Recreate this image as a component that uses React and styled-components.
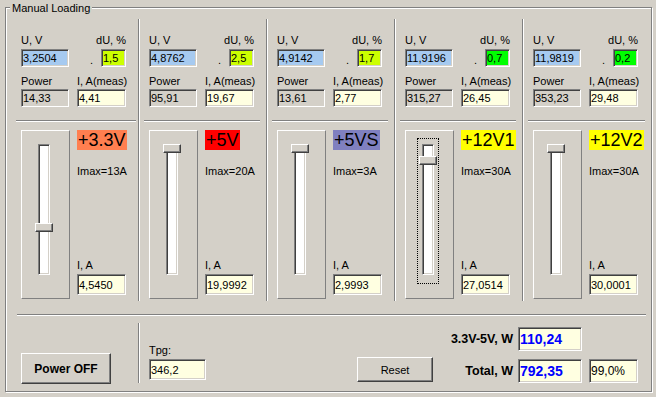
import React from "react";
import styled, { createGlobalStyle } from "styled-components";

const GlobalStyle = createGlobalStyle`
  html, body {
    margin: 0;
    padding: 0;
    background: #d4d0c8;
  }
  body {
    font-family: "Liberation Sans", Arial, sans-serif;
    font-size: 11px;
    color: #000;
  }
`;

const channels = [
  { u: "3,2504", du: "1,5", duColor: "#ccff00", power: "14,33", meas: "4,41", name: "+3.3V", tag: "#ff7f50", imax: 13, current: 4.545 },
  { u: "4,8762", du: "2,5", duColor: "#ccff00", power: "95,91", meas: "19,67", name: "+5V", tag: "#ff0000", imax: 20, current: 19.9992 },
  { u: "4,9142", du: "1,7", duColor: "#ccff00", power: "13,61", meas: "2,77", name: "+5VS", tag: "#8080c0", imax: 3, current: 2.9993 },
  { u: "11,9196", du: "0,7", duColor: "#00ff00", power: "315,27", meas: "26,45", name: "+12V1", tag: "#ffff00", imax: 30, current: 27.0514, focused: true },
  { u: "11,9819", du: "0,2", duColor: "#00ff00", power: "353,23", meas: "29,48", name: "+12V2", tag: "#ffff00", imax: 30, current: 30.0001 },
];

const fmt = (n) => n.toFixed(4).replace(".", ",");

const Window = styled.div`
  width: 656px;
  height: 397px;
  box-sizing: border-box;
  padding: 7px 0 0 5px;
  overflow: hidden;
`;

const Group = styled.section`
  position: relative;
  box-sizing: border-box;
  width: 647px;
  height: 385px;
  border: 1px solid #808080;
  box-shadow: inset 1px 1px 0 #fff, 1px 1px 0 #fff;
`;

const Legend = styled.span`
  position: absolute;
  top: -6px;
  left: 4px;
  padding: 0 2px;
  line-height: 13px;
  background: #d4d0c8;
`;

const Channels = styled.div`
  display: grid;
  grid-template-columns: 132px 128px 128px 128px 1fr;
  margin-top: 11px;
  height: 282px;
`;

const Channel = styled.div`
  box-sizing: border-box;
  padding-left: ${(p) => (p.$first ? 15 : 10)}px;
  border-left: ${(p) => (p.$first ? "none" : "1px solid #808080")};
  box-shadow: ${(p) => (p.$first ? "none" : "inset 1px 0 0 #fff")};
`;

const TopGrid = styled.div`
  display: grid;
  grid-template-columns: 48px 49px;
  column-gap: 8px;
  padding-top: 15px;
`;

const Caption = styled.div`
  line-height: 13px;
  height: 13px;
  white-space: nowrap;
  margin-top: ${(p) => p.$mt || 0}px;
  text-align: ${(p) => p.$align || "left"};
`;

const Field = styled.div`
  box-sizing: border-box;
  width: ${(p) => p.$w}px;
  height: ${(p) => p.$h || 18}px;
  margin-top: ${(p) => p.$mt || 0}px;
  margin-left: ${(p) => p.$ml || 0}px;
  padding-left: 1px;
  display: flex;
  align-items: center;
  background: ${(p) => p.$bg || "#ffffe1"};
  border: 1px solid;
  border-color: #808080 #fff #fff #808080;
  box-shadow: inset 1px 1px 0 #404040, inset -1px -1px 0 #d4d0c8;
  font-size: ${(p) => p.$size || 11}px;
  font-weight: ${(p) => (p.$bold ? 700 : 400)};
  color: ${(p) => p.$color || "#000"};
  white-space: nowrap;
  overflow: hidden;
`;

const DuCell = styled.div`
  display: flex;
  align-items: flex-end;
  justify-content: space-between;
  margin-top: 2px;
`;

const Dot = styled.span`
  margin-left: 13px;
  line-height: 13px;
`;

const Rule = styled.div`
  height: 0;
  border-top: 1px solid #808080;
  border-bottom: 1px solid #fff;
  margin: ${(p) => p.$margin};
`;

const SliderRow = styled.div`
  display: flex;
  margin-top: 8px;
  height: 169px;
`;

const Frame = styled.div`
  box-sizing: border-box;
  width: 49px;
  height: 169px;
  border: 1px solid;
  border-color: #fff #808080 #808080 #fff;
  padding: 7px 0 0 11px;
`;

const TrackWrap = styled.div`
  box-sizing: border-box;
  width: 22px;
  height: 146px;
  padding: 5px 4px 8px 4px;
  border: 1px dotted ${(p) => (p.$focused ? "#000" : "transparent")};
`;

const Track = styled.div`
  position: relative;
  box-sizing: border-box;
  width: 12px;
  height: 131px;
  background: #fff;
  border: 1px solid;
  border-color: #808080 #fff #fff #808080;
  box-shadow: inset 1px 1px 0 #404040, inset -1px -1px 0 #d4d0c8;
`;

const Thumb = styled.div`
  position: absolute;
  left: -4px;
  box-sizing: border-box;
  width: 18px;
  height: 9px;
  background: #d4d0c8;
  border: 1px solid;
  border-color: #fff #404040 #404040 #fff;
  box-shadow: inset -1px -1px 0 #808080;
`;

const InfoCol = styled.div`
  display: flex;
  flex-direction: column;
  align-items: flex-start;
  margin-left: 7px;
  padding-bottom: 4px;
`;

const Tag = styled.div`
  height: 20px;
  line-height: 20px;
  padding: 0 1px;
  font-size: 18px;
  background: ${(p) => p.$color};
  white-space: nowrap;
`;

const Spacer = styled.div`
  flex: 1;
`;

const BottomRow = styled.div`
  display: flex;
  align-items: flex-start;
`;

const LeftCell = styled.div`
  box-sizing: border-box;
  width: 132px;
  padding: 37px 0 0 15px;
`;

const VSep = styled.div`
  width: 0;
  height: 60px;
  margin-top: 7px;
  border-left: 1px solid #808080;
  border-right: 1px solid #fff;
`;

const Button = styled.button`
  box-sizing: border-box;
  width: ${(p) => p.$w}px;
  height: ${(p) => p.$h}px;
  margin: ${(p) => p.$margin || 0};
  padding: 0;
  background: #d4d0c8;
  border: 1px solid;
  border-color: #fff #404040 #404040 #fff;
  box-shadow: inset -1px -1px 0 #808080;
  font-family: "Liberation Sans", Arial, sans-serif;
  font-size: ${(p) => (p.$bold ? 12 : 11)}px;
  font-weight: ${(p) => (p.$bold ? 700 : 400)};
  color: #000;
`;

const TpgBlock = styled.div`
  margin: 28px 0 0 9px;
`;

const Totals = styled.div`
  margin: 11px 0 0 8px;
`;

const SumRow = styled.div`
  display: flex;
  align-items: center;
  margin-top: ${(p) => p.$mt || 0}px;
`;

const SumLabel = styled.div`
  width: 72px;
  margin-right: 5px;
  text-align: right;
  font-size: 12.5px;
  font-weight: 700;
  white-space: nowrap;
`;

const ChannelView = ({ ch, first }) => {
  const travel = 122;
  const ratio = Math.min(1, ch.current / ch.imax);
  const top = Math.round((1 - ratio) * travel) - 1;
  return (
    <Channel $first={first}>
      <TopGrid>
        <Caption>U, V</Caption>
        <Caption $align="right">dU, %</Caption>
        <Field $w={48} $mt={2} $bg="#a6caf0">{ch.u}</Field>
        <DuCell>
          <Dot>.</Dot>
          <Field $w={25} $bg={ch.duColor}>{ch.du}</Field>
        </DuCell>
        <Caption $mt={8}>Power</Caption>
        <Caption $mt={8}>I, A(meas)</Caption>
        <Field $w={48} $mt={1} $bg="#d4d0c8">{ch.power}</Field>
        <Field $w={49} $mt={1}>{ch.meas}</Field>
      </TopGrid>
      <Rule $margin={`13px ${first ? 2 : 6}px 0 -5px`} />
      <SliderRow>
        <Frame>
          <TrackWrap $focused={ch.focused}>
            <Track>
              <Thumb style={{ top }} />
            </Track>
          </TrackWrap>
        </Frame>
        <InfoCol>
          <Tag $color={ch.tag}>{ch.name}</Tag>
          <Caption $mt={15}>Imax={ch.imax}A</Caption>
          <Spacer />
          <Caption>I, A</Caption>
          <Field $w={49} $h={21} $mt={2}>{fmt(ch.current)}</Field>
        </InfoCol>
      </SliderRow>
    </Channel>
  );
};

export default function App() {
  return (
    <>
      <GlobalStyle />
      <Window>
        <Group>
          <Legend>Manual Loading</Legend>
          <Channels>
            {channels.map((ch, i) => (
              <ChannelView key={ch.name} ch={ch} first={i === 0} />
            ))}
          </Channels>
          <Rule $margin="13px 5px 0 11px" />
          <BottomRow>
            <LeftCell>
              <Button $w={90} $h={31} $bold>Power OFF</Button>
            </LeftCell>
            <VSep />
            <TpgBlock>
              <Caption>Tpg:</Caption>
              <Field $w={57} $h={21} $mt={2}>346,2</Field>
            </TpgBlock>
            <Button $w={76} $h={25} $margin="41px 0 0 151px">Reset</Button>
            <Totals>
              <SumRow>
                <SumLabel>3.3V-5V, W</SumLabel>
                <Field $w={64} $h={24} $size={14} $bold $color="#0000ff">110,24</Field>
              </SumRow>
              <SumRow $mt={8}>
                <SumLabel>Total, W</SumLabel>
                <Field $w={64} $h={24} $size={14} $bold $color="#0000ff">792,35</Field>
                <Field $w={49} $h={24} $ml={7} $size={12}>99,0%</Field>
              </SumRow>
            </Totals>
          </BottomRow>
        </Group>
      </Window>
    </>
  );
}
